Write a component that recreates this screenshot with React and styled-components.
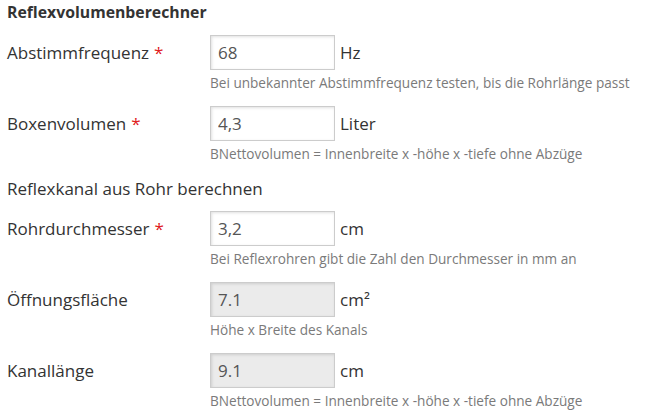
import React from "react";
import styled, { createGlobalStyle } from "styled-components";

const GlobalStyle = createGlobalStyle`
    body {
        margin: 0;
        background: #ffffff;
        color: #333333;
        font-family: "Open Sans", "Liberation Sans", sans-serif;
    }
`;

const Form = styled.form`
    padding: 0 0 0 7px;
`;

const Title = styled.h3`
    margin: 0 0 11px;
    font-size: 15.8px;
    font-weight: 700;
    line-height: 24px;
`;

const SectionTitle = styled.h4`
    margin: 14px 0 10px;
    font-size: 17px;
    font-weight: 400;
    line-height: 24px;
`;

const Row = styled.div`
    display: grid;
    grid-template-columns: 203px 1fr;
    margin-bottom: 14px;
`;

const Label = styled.label`
    display: flex;
    align-items: center;
    height: 35px;
    font-size: 17px;
`;

const Required = styled.span`
    margin-left: 5px;
    color: #e0191c;
`;

const Field = styled.div`
    display: flex;
    align-items: center;
`;

const Input = styled.input`
    box-sizing: border-box;
    width: 125px;
    height: 35px;
    padding: 0 7px;
    border: 1px solid #cccccc;
    border-radius: 0;
    outline: 0;
    background: ${(p) => (p.$locked ? "#ebebeb" : "#ffffff")};
    box-shadow: inset 1px 1px 3px rgba(0, 0, 0, 0.12);
    color: #555555;
    font-family: inherit;
    font-size: 17px;
`;

const Unit = styled.span`
    margin-left: 5px;
    font-size: 17px;
`;

const Help = styled.div`
    grid-column: 2;
    margin-top: 3px;
    color: #7a7a7a;
    font-size: 13.6px;
    line-height: 19px;
`;

const FormRow = ({ label, required, value, unit, help, locked }) => (
    <Row>
        <Label>
            {label}
            {required && <Required>*</Required>}
        </Label>
        <Field>
            <Input defaultValue={value} readOnly={locked} $locked={locked} />
            <Unit>{unit}</Unit>
        </Field>
        <Help>{help}</Help>
    </Row>
);

export default function App() {
    return (
        <>
            <GlobalStyle />
            <Form>
                <Title>Reflexvolumenberechner</Title>
                <FormRow
                    label="Abstimmfrequenz"
                    required
                    value="68"
                    unit="Hz"
                    help="Bei unbekannter Abstimmfrequenz testen, bis die Rohrlänge passt"
                />
                <FormRow
                    label="Boxenvolumen"
                    required
                    value="4,3"
                    unit="Liter"
                    help="BNettovolumen = Innenbreite x -höhe x -tiefe ohne Abzüge"
                />
                <SectionTitle>Reflexkanal aus Rohr berechnen</SectionTitle>
                <FormRow
                    label="Rohrdurchmesser"
                    required
                    value="3,2"
                    unit="cm"
                    help="Bei Reflexrohren gibt die Zahl den Durchmesser in mm an"
                />
                <FormRow
                    label="Öffnungsfläche"
                    value="7.1"
                    unit="cm²"
                    help="Höhe x Breite des Kanals"
                    locked
                />
                <FormRow
                    label="Kanallänge"
                    value="9.1"
                    unit="cm"
                    help="BNettovolumen = Innenbreite x -höhe x -tiefe ohne Abzüge"
                    locked
                />
            </Form>
        </>
    );
}
